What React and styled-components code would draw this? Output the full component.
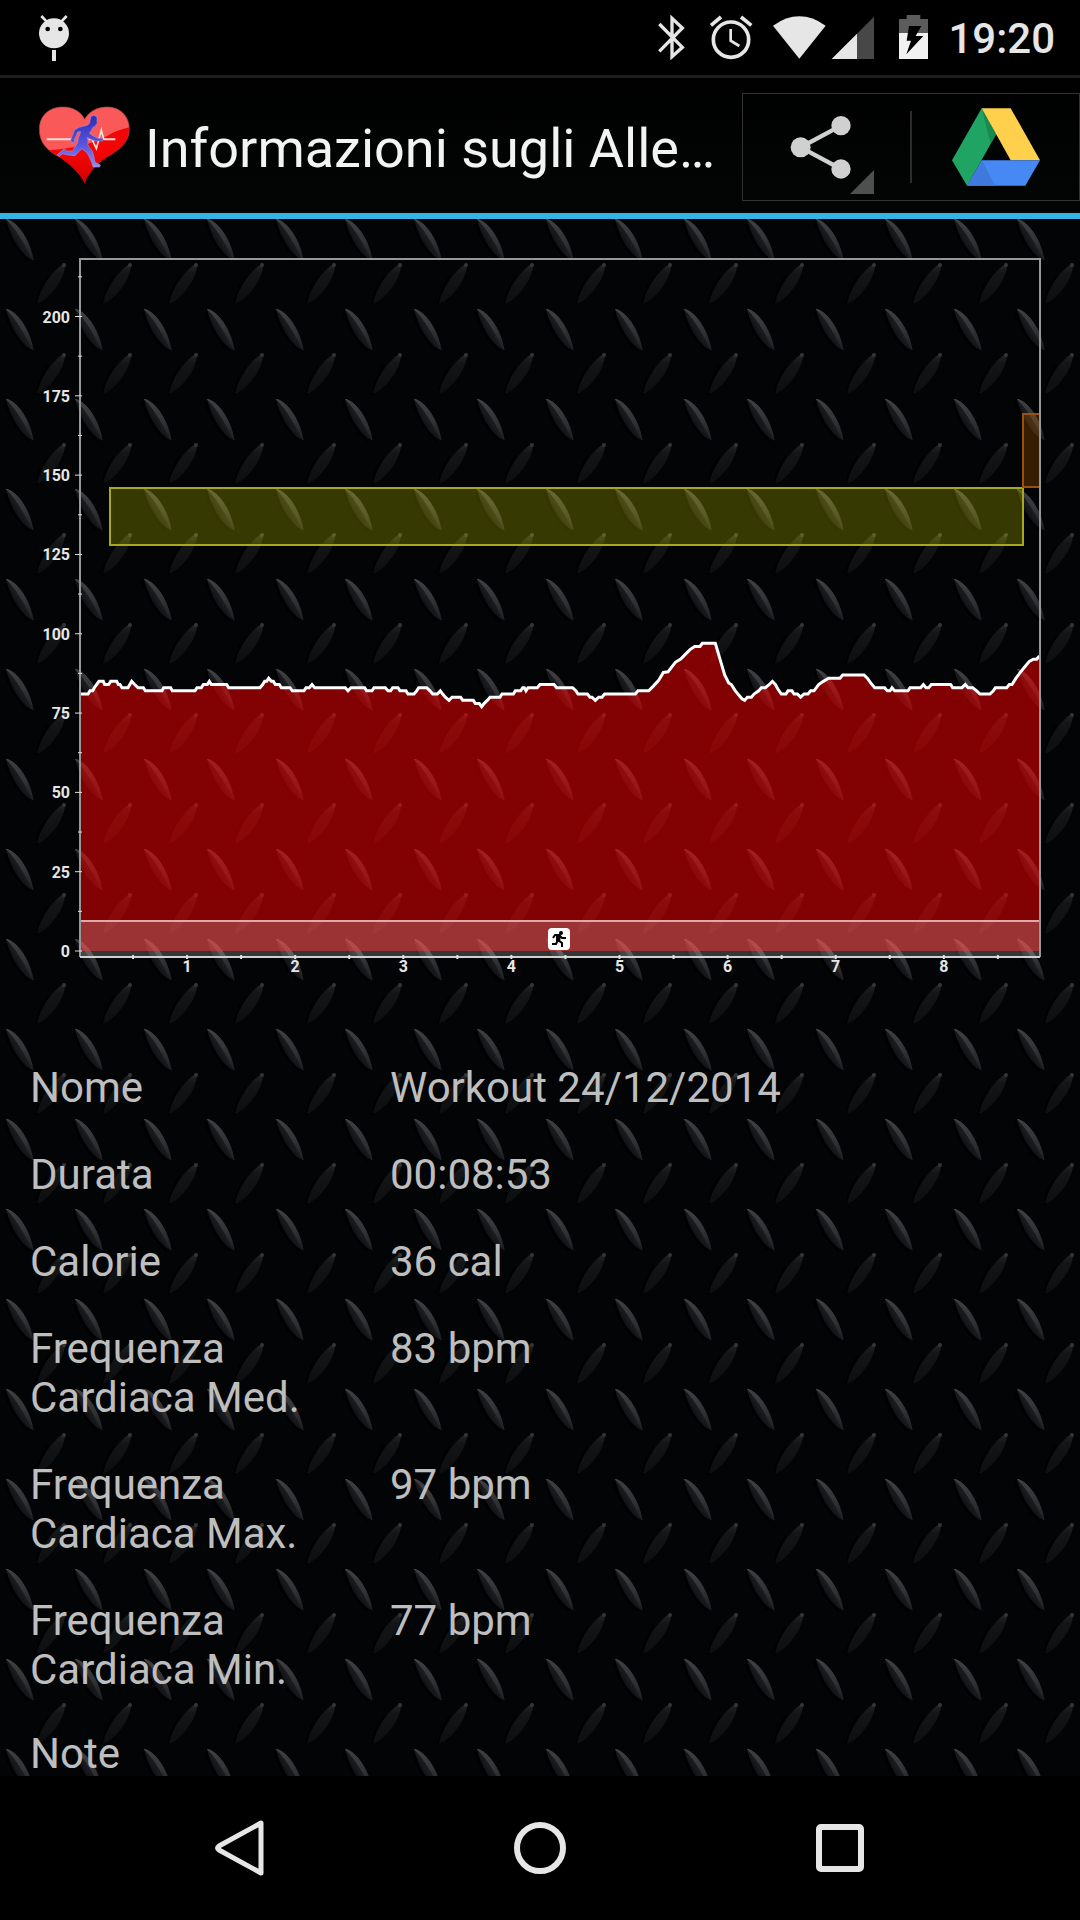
import React from "react";
import styled, { createGlobalStyle } from "styled-components";

const details = [
  { label: "Nome", value: "Workout 24/12/2014" },
  { label: "Durata", value: "00:08:53" },
  { label: "Calorie", value: "36 cal" },
  { label: "Frequenza Cardiaca Med.", value: "83 bpm" },
  { label: "Frequenza Cardiaca Max.", value: "97 bpm" },
  { label: "Frequenza Cardiaca Min.", value: "77 bpm" },
  { label: "Note", value: "" },
];

// [sample position, bpm], three samples for each chart unit
const heartRate = [
  [0, 81], [24, 81], [30, 82], [38, 82], [43, 83], [50, 84], [57, 85], [70, 85],
  [74, 84], [86, 84], [92, 85], [110, 85], [115, 84], [120, 84], [126, 83],
  [144, 83], [155, 85], [164, 84], [174, 83], [190, 83], [196, 82], [246, 82],
  [251, 83], [272, 83], [277, 82], [345, 82], [351, 83], [364, 83], [370, 84],
  [382, 84], [388, 85], [394, 84], [440, 84], [446, 83], [540, 83], [548, 84],
  [554, 85], [560, 85], [566, 86], [574, 85], [580, 85], [586, 84], [598, 84],
  [604, 83], [630, 83], [637, 82], [672, 82], [678, 83], [688, 83], [696, 84],
  [704, 83], [796, 83], [804, 82], [813, 83], [854, 83], [860, 82], [876, 82],
  [882, 83], [916, 83], [924, 82], [932, 82], [938, 83], [954, 83], [960, 82],
  [978, 82], [984, 81], [1002, 81], [1010, 82], [1016, 83], [1040, 83],
  [1050, 82], [1058, 81], [1072, 81], [1081, 82], [1088, 81], [1096, 80],
  [1107, 79], [1116, 80], [1142, 80], [1148, 79], [1180, 79], [1186, 78],
  [1198, 78], [1205, 77], [1212, 78], [1222, 79], [1230, 80], [1260, 80],
  [1266, 81], [1300, 81], [1306, 82], [1322, 82], [1328, 83], [1333, 83],
  [1338, 82], [1344, 83], [1372, 83], [1380, 84], [1422, 84], [1430, 83],
  [1478, 83], [1488, 82], [1494, 81], [1522, 81], [1530, 80], [1536, 80],
  [1546, 79], [1556, 80], [1566, 80], [1574, 81], [1666, 81], [1674, 82],
  [1706, 82], [1720, 83.5], [1736, 85.3], [1750, 87.8], [1764, 88], [1786, 91],
  [1802, 92], [1816, 93.5], [1830, 95], [1844, 96], [1860, 96], [1867, 97],
  [1906, 97], [1920, 92], [1934, 87], [1946, 84.5], [1954, 84], [1966, 82],
  [1986, 79.5], [1994, 79], [2002, 80], [2014, 80], [2022, 81], [2036, 82],
  [2044, 83], [2056, 83], [2068, 84], [2077, 85], [2086, 84], [2094, 82.5],
  [2104, 81], [2118, 81], [2124, 82], [2136, 82], [2142, 81], [2152, 81],
  [2162, 80], [2172, 81], [2184, 81], [2192, 82], [2202, 82], [2216, 84],
  [2230, 85], [2246, 86], [2280, 86], [2288, 87], [2352, 87], [2362, 86],
  [2372, 84.5], [2384, 83], [2414, 83], [2422, 82], [2430, 82], [2436, 83],
  [2444, 82], [2484, 82], [2490, 83], [2522, 83], [2530, 84], [2538, 83],
  [2546, 83], [2554, 84], [2612, 84], [2618, 83], [2646, 83], [2656, 84],
  [2664, 83], [2678, 83], [2690, 82], [2700, 81], [2730, 81], [2740, 82],
  [2746, 83], [2780, 83], [2788, 84], [2796, 84], [2808, 86], [2822, 88],
  [2834, 89.5], [2848, 91.3], [2860, 92], [2870, 92], [2878, 93],
];

const LEFT = 80;
const RIGHT = 1040;
const TOP = 40;
const ZERO = 732;
const BOTTOM = 738;

const toX = (sample) => LEFT + sample / 3;
const toY = (bpm) => ZERO - bpm * 3.1725;
const minuteX = (minute) => 79 + minute * 108.1;

const BluetoothIcon = () => (
  <svg width="60" height="45" viewBox="63 45 180 135" aria-hidden="true">
    <path
      d="M118 72 L187 142 L156 170 V55 L187 84 L118 154"
      fill="none"
      stroke="#e6e6e6"
      strokeWidth="10"
    />
  </svg>
);

const AlarmIcon = () => (
  <svg width="60" height="45" viewBox="243 45 180 135" aria-hidden="true">
    <g fill="none" stroke="#e6e6e6">
      <circle cx="333" cy="119" r="53" strokeWidth="11" />
      <path d="M273 76 L303 51 M363 51 L394 76" strokeWidth="11" />
      <path d="M332 87 V122 L358 138" strokeWidth="8" />
    </g>
  </svg>
);

const WifiIcon = () => (
  <svg width="68" height="45" viewBox="423 45 204 135" aria-hidden="true">
    <path d="M459 77 Q538 21 617 77 L538 176 Z" fill="#e6e6e6" />
  </svg>
);

const SignalIcon = () => (
  <svg width="48" height="45" viewBox="627 45 144 135" aria-hidden="true">
    <path d="M762 50 V177 H635 Z" fill="#474747" />
    <path d="M711 101 V177 H635 Z" fill="#e6e6e6" />
  </svg>
);

const BatteryIcon = () => (
  <svg width="65" height="45" viewBox="771 45 195 135" aria-hidden="true">
    <path d="M860 45 H901 V57 H924 V99 H837 V57 H860 Z" fill="#5c5c5c" />
    <path d="M837 99 H924 V177 H837 Z" fill="#f2f2f2" />
    <path d="M867 78 H904 L887 108 H910 L859 163 L873 122 H860 Z" fill="#000" />
  </svg>
);

const NotificationIcon = () => (
  <svg width="40" height="50" viewBox="102 40 120 150" aria-hidden="true">
    <circle cx="162" cy="101" r="45" fill="#e6e6e6" />
    <path d="M124 49 L140 66 M200 49 L184 66" stroke="#e6e6e6" strokeWidth="8" />
    <path d="M156 151 H168 V184 H156 Z" fill="#e6e6e6" />
    <circle cx="143" cy="88" r="7" fill="#000" />
    <circle cx="181" cy="88" r="7" fill="#000" />
  </svg>
);

const HeartLogo = () => (
  <svg width="100" height="90" viewBox="0 8 300 270" aria-hidden="true">
    <defs>
      <linearGradient id="heartFill" x1="0" y1="0" x2="0" y2="1">
        <stop offset="0" stopColor="#e80a0a" />
        <stop offset="0.6" stopColor="#f40505" />
        <stop offset="1" stopColor="#c80000" />
      </linearGradient>
      <linearGradient id="runnerFill" x1="0" y1="0" x2="0" y2="1">
        <stop offset="0" stopColor="#2d2bb0" />
        <stop offset="0.6" stopColor="#5a58e0" />
        <stop offset="1" stopColor="#8f90ee" />
      </linearGradient>
      <clipPath id="heartClip">
        <path d="M152 60 C140 36 116 23 86 23 C45 23 16 50 16 90 C16 130 40 153 70 170 C108 194 137 222 152 253 C163 220 190 192 225 170 C262 147 286 125 286 90 C286 50 258 23 220 23 C190 23 165 36 152 60 Z" />
      </clipPath>
    </defs>
    <g clipPath="url(#heartClip)">
      <path d="M0 0 H300 V270 H0 Z" fill="url(#heartFill)" />
      <path
        d="M0 0 H300 V82 Q255 88 215 112 Q150 146 45 152 L0 150 Z"
        fill="#ff7474"
        opacity="0.75"
      />
    </g>
    <path
      d="M152 60 C140 36 116 23 86 23 C45 23 16 50 16 90 C16 130 40 153 70 170 M152 60 C165 36 190 23 220 23 C258 23 286 50 286 90 C286 125 262 147 225 170"
      fill="none"
      stroke="#9d4a4a"
      strokeWidth="3"
      opacity="0.7"
    />
    <path d="M38 120 H115 M208 120 H244" stroke="#ffdcdc" strokeWidth="6" />
    <path
      d="M164 121 L173 118 L187 148 L202 92 L209 120"
      fill="none"
      stroke="#ffe2d8"
      strokeWidth="5"
    />
    <path
      d="M170 52 Q178 45 187 51 Q191 56 189 65 Q192 73 186 76 Q186 83 180 82 L176 85 Q173 94 166 102 Q176 110 190 116 L207 118 L206 125 L185 125 Q170 122 160 114 Q164 126 161 136 Q166 146 174 154 Q181 172 183 189 L198 196 Q201 201 196 203 H178 Q174 200 175 194 Q166 172 160 162 Q152 153 144 148 Q132 158 123 169 Q102 168 86 163 L76 171 L69 167 L90 149 Q96 150 95 155 L116 155 Q124 142 130 132 Q132 117 140 97 L131 98 Q127 109 122 119 L121 129 L113 130 L110 122 L122 91 Q134 82 151 80 Q164 78 167 70 Z"
      fill="url(#runnerFill)"
      stroke="#a98ad6"
      strokeWidth="2"
    />
  </svg>
);

const ShareIcon = () => (
  <svg width="62" height="64" viewBox="508 340 186 192" aria-hidden="true">
    <path
      d="M661 372 L540 437 L661 502"
      fill="none"
      stroke="#d0d0d0"
      strokeWidth="13"
    />
    <circle cx="661" cy="372" r="29" fill="#d0d0d0" />
    <circle cx="540" cy="437" r="30" fill="#d0d0d0" />
    <circle cx="661" cy="502" r="29" fill="#d0d0d0" />
  </svg>
);

const DriveIcon = () => (
  <svg width="88" height="78" viewBox="996 324 264 233" aria-hidden="true">
    <path d="M1085 324 L1128 403 L1041 557 L996 480 Z" fill="#1fa463" />
    <path d="M1085 324 L1128 403 L1112 430 Z" fill="#178a50" />
    <path d="M1085 324 H1172 L1260 480 H1172 Z" fill="#ffd04b" />
    <path d="M1085 480 H1260 L1216 557 H1041 Z" fill="#4688f4" />
    <path d="M1085 480 L1126 557 H1041 Z" fill="#3f79dc" />
  </svg>
);

const RunnerBadge = () => (
  <g>
    <rect x="548" y="709" width="22" height="22" rx="4" fill="#fff" />
    <circle cx="561" cy="714" r="2" fill="#000" />
    <path
      d="M553 719 L555 716 L559 716 L558 721 L562 724 L562 728 M560 717 L562 719 L566 719 M558 721 L556 725 L552 725"
      fill="none"
      stroke="#000"
      strokeWidth="2"
    />
    <path d="M556 715 L561 716 L560 723 L556 722 Z" fill="#000" />
  </g>
);

// Tread plate texture behind the content
const TreadPlate = () => (
  <Plate aria-hidden="true">
    <defs>
      <linearGradient id="leftBump" x1="0" y1="1" x2="1" y2="0">
        <stop offset="0.3" stopColor="#0b0c0f" />
        <stop offset="0.6" stopColor="#202124" />
      </linearGradient>
      <linearGradient id="leftEdge" x1="0" y1="0" x2="0" y2="1">
        <stop offset="0" stopColor="#404042" />
        <stop offset="0.5" stopColor="#343437" />
        <stop offset="1" stopColor="#1e1f22" />
      </linearGradient>
      <linearGradient id="rightBump" x1="0" y1="0" x2="0" y2="1">
        <stop offset="0" stopColor="#26272a" />
        <stop offset="0.25" stopColor="#131516" />
        <stop offset="1" stopColor="#0c0e0f" />
      </linearGradient>
      <pattern id="plate" width="270" height="90" patternUnits="userSpaceOnUse">
        <path d="M0 0 H270 V90 H0 Z" fill="#020405" />
        {[5, 74, 143, 206].map((x) => (
          <g key={x} transform={`translate(${x} 0)`}>
            <path d="M0 3 Q6 26 24 42" fill="none" stroke="#000" strokeWidth="3" />
            <path d="M1 0 C13 3 25 22 28 41 C17 37 6 20 1 0 Z" fill="url(#leftBump)" />
            <path
              d="M1 0 C13 3 25 22 28 41 C22 29 13 11 1 0 Z"
              fill="url(#leftEdge)"
              stroke="url(#leftEdge)"
              strokeWidth="1"
            />
          </g>
        ))}
        {[36, 102, 168, 234].map((x) => (
          <g key={x} transform={`translate(${x} 44)`}>
            <path d="M1 42 Q1 30 12 13" fill="none" stroke="#000" strokeWidth="3" />
            <path d="M29 0 C30 12 17 34 1 41 C3 28 15 8 29 0 Z" fill="url(#rightBump)" />
            <circle cx="28" cy="2" r="2" fill="#333436" />
          </g>
        ))}
      </pattern>
    </defs>
    <rect width="100%" height="100%" fill="url(#plate)" />
  </Plate>
);

const HeartRateChart = () => {
  const line = heartRate.map(([s, bpm]) => `${toX(s)},${toY(bpm)}`).join(" ");
  const bpmLabels = [0, 25, 50, 75, 100, 125, 150, 175, 200];
  const minutes = [1, 2, 3, 4, 5, 6, 7, 8];

  return (
    <Chart viewBox="0 0 1080 800" role="img" aria-label="Frequenza cardiaca">
      <polygon
        points={`${LEFT},${ZERO} ${line} ${RIGHT},${ZERO}`}
        fill="#ff0000"
        fillOpacity="0.51"
      />
      <rect
        x={LEFT}
        y="702"
        width={RIGHT - LEFT}
        height={BOTTOM - 702}
        fill="#fff"
        fillOpacity="0.2"
      />
      <path d={`M${LEFT} 702 H${RIGHT}`} stroke="#e0a8a8" strokeWidth="2" />
      <rect
        x="110"
        y="269"
        width="913"
        height="57"
        fill="#ffff00"
        fillOpacity="0.21"
        stroke="#a8a81c"
        strokeWidth="2"
      />
      <rect
        x="1023"
        y="195"
        width="17"
        height="73"
        fill="#ff8000"
        fillOpacity="0.21"
        stroke="#9c500c"
        strokeWidth="2"
      />
      <polyline points={line} fill="none" stroke="#fff" strokeWidth="3" />
      <path
        d={`M${LEFT} ${BOTTOM} V${TOP} H${RIGHT} V${BOTTOM}`}
        fill="none"
        stroke="#989898"
        strokeWidth="2"
      />
      <path d={`M${LEFT} ${BOTTOM} H${RIGHT}`} stroke="#d0d0d0" strokeWidth="2" />
      {bpmLabels.map((bpm) => (
        <g key={bpm}>
          <path
            d={`M75 ${toY(bpm)} H82 M78 ${toY(bpm + 12.5)} H82`}
            stroke="#e0e0e0"
            strokeWidth="1"
          />
          <ChartLabel x="70" y={toY(bpm) + 6} textAnchor="end">
            {bpm}
          </ChartLabel>
        </g>
      ))}
      {minutes.map((minute) => (
        <g key={minute}>
          <path
            d={`M${minuteX(minute)} 736 V740 M${minuteX(minute - 0.5)} 736 V740`}
            stroke="#e0e0e0"
            strokeWidth="2"
          />
          <ChartLabel x={minuteX(minute)} y="753" textAnchor="middle">
            {minute}
          </ChartLabel>
        </g>
      ))}
      <path d={`M${minuteX(8.5)} 736 V740`} stroke="#e0e0e0" strokeWidth="2" />
      <RunnerBadge />
    </Chart>
  );
};

const App = () => {
  return (
    <Page>
      <GlobalStyle />
      <StatusBar>
        <NotificationIcon />
        <StatusIcons>
          <BluetoothIcon />
          <AlarmIcon />
          <WifiIcon />
          <SignalIcon />
          <BatteryIcon />
          <Clock>19:20</Clock>
        </StatusIcons>
      </StatusBar>
      <ActionBar>
        <HeartLogo />
        <Title>Informazioni sugli Alle…</Title>
        <ShareGroup>
          <ShareButton type="button" aria-label="Condividi">
            <ShareIcon />
          </ShareButton>
          <Divider />
          <DriveButton type="button" aria-label="Drive">
            <DriveIcon />
          </DriveButton>
        </ShareGroup>
      </ActionBar>
      <Content>
        <TreadPlate />
        <HeartRateChart />
        <Details>
          {details.map(({ label, value }) => (
            <DetailRow key={label}>
              <dt>{label}</dt>
              <dd>{value}</dd>
            </DetailRow>
          ))}
        </Details>
      </Content>
      <NavBar>
        <NavButton type="button" aria-label="Indietro">
          <svg width="60" height="60" viewBox="0 0 60 60">
            <path
              d="M51 5 V55 L9 32 Q6 30 9 28 Z"
              fill="none"
              stroke="#e6e6e6"
              strokeWidth="5"
              strokeLinejoin="round"
            />
          </svg>
        </NavButton>
        <NavButton type="button" aria-label="Home">
          <svg width="60" height="60" viewBox="0 0 60 60">
            <circle cx="30" cy="30" r="23" fill="none" stroke="#e6e6e6" strokeWidth="6" />
          </svg>
        </NavButton>
        <NavButton type="button" aria-label="Recenti">
          <svg width="60" height="60" viewBox="0 0 60 60">
            <rect
              x="9"
              y="9"
              width="42"
              height="42"
              rx="2"
              fill="none"
              stroke="#e6e6e6"
              strokeWidth="6"
            />
          </svg>
        </NavButton>
      </NavBar>
    </Page>
  );
};

const GlobalStyle = createGlobalStyle`
  * {
    box-sizing: border-box;
    margin: 0;
    padding: 0;
  }
  body {
    background: #000;
    font-family: Roboto, "Noto Sans", sans-serif;
  }
  svg {
    display: block;
    flex-shrink: 0;
  }
  button {
    border: 0;
    background: none;
    font: inherit;
    cursor: pointer;
  }
`;

const Page = styled.div`
  display: flex;
  flex-direction: column;
  min-height: 100vh;
  color: #bebebe;
`;

const StatusBar = styled.header`
  display: flex;
  align-items: center;
  justify-content: space-between;
  height: 78px;
  padding: 0 25px 0 34px;
  border-bottom: 3px solid #1e1e1e;
`;

const StatusIcons = styled.div`
  display: flex;
  align-items: center;
`;

const Clock = styled.span`
  margin-left: 6px;
  padding-top: 3px;
  font-size: 42px;
  line-height: 48px;
  font-weight: 500;
  color: #e6e6e6;
`;

const ActionBar = styled.div`
  display: flex;
  align-items: center;
  height: 141px;
  padding: 3px 0 0 34px;
  background: linear-gradient(#000, #030505);
  border-bottom: 6px solid #37b2e6;
`;

const Title = styled.h1`
  flex: 1;
  min-width: 0;
  padding: 4px 0 0 11px;
  overflow: hidden;
  white-space: nowrap;
  font-size: 54px;
  line-height: 64px;
  font-weight: 400;
  color: #f3f3f3;
`;

const ShareGroup = styled.div`
  display: flex;
  align-items: center;
  width: 338px;
  height: 108px;
  border: 1px solid #333;
`;

const ShareButton = styled.button`
  position: relative;
  display: flex;
  align-items: center;
  justify-content: center;
  width: 167px;
  height: 106px;
  padding-right: 12px;

  &::after {
    content: "";
    position: absolute;
    right: 36px;
    bottom: 6px;
    width: 24px;
    height: 24px;
    background: #4e5050;
    clip-path: polygon(100% 0, 100% 100%, 0 100%);
  }
`;

const Divider = styled.span`
  width: 2px;
  height: 72px;
  background: #2c2c2c;
`;

const DriveButton = styled.button`
  display: flex;
  align-items: center;
  justify-content: center;
  flex: 1;
  height: 106px;
`;

const Content = styled.main`
  position: relative;
  flex: 1;
  background: #020405;
`;

const Plate = styled.svg`
  position: absolute;
  inset: 0;
  width: 100%;
  height: 100%;
`;

const Chart = styled.svg`
  position: relative;
  width: 100%;
  height: auto;
`;

const ChartLabel = styled.text`
  font-size: 16px;
  font-weight: 700;
  fill: #e6e6e6;
`;

const Details = styled.dl`
  position: relative;
  display: flex;
  flex-direction: column;
  gap: 38px;
  padding: 44px 30px 0;
  font-size: 42px;
  line-height: 49px;
`;

const DetailRow = styled.div`
  display: grid;
  grid-template-columns: 6fr 11fr;

  &:last-child {
    line-height: 44px;
  }
`;

const NavBar = styled.nav`
  display: flex;
  align-items: center;
  height: 144px;
  padding: 0 90px;
  background: #000;
`;

const NavButton = styled.button`
  display: flex;
  align-items: center;
  justify-content: center;
  flex: 1;
  height: 144px;
`;

export default App;
